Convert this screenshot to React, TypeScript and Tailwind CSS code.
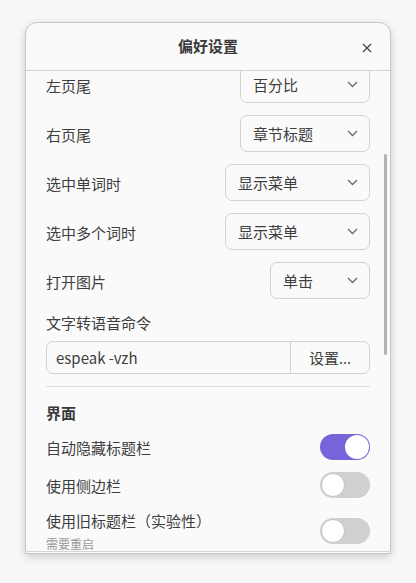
import { ReactNode } from 'react';

const Chevron = () => (
  <svg width="11" height="7" viewBox="0 0 11 7" className="text-[#6a6a6a]">
    <polyline points="1,1 5.5,5.5 10,1" fill="none" stroke="currentColor" strokeWidth="1.3" />
  </svg>
);

const Dropdown = ({ value, width }: { value: string; width: string }) => (
  <div
    className={`${width} h-[37px] flex items-center justify-between pl-[12px] pr-[11px] border border-[#d2d2d2] rounded-[7px] bg-[#fafafa] text-[15px] text-[#3e3e3e]`}
  >
    <span className="pt-[2px]">{value}</span>
    <Chevron />
  </div>
);

const Switch = ({ on }: { on?: boolean }) => (
  <div
    className={`w-[50px] h-[26px] rounded-full flex items-center px-[1px] ${
      on ? 'bg-[#7764d8] justify-end' : 'bg-[#d0d0d0] justify-start'
    }`}
  >
    <div className={`w-[24px] h-[24px] rounded-full bg-white ${on ? '' : 'border border-[#c4c4c4]'}`} />
  </div>
);

const Row = ({ label, children }: { label: ReactNode; children: ReactNode }) => (
  <div className="flex items-center justify-between">
    <span className="text-[15px] text-[#3e3e3e] pt-[3px]">{label}</span>
    {children}
  </div>
);

export default function App() {
  return (
    <div
      className="w-[416px] h-[583px] bg-[#f8f8f8] pt-[22px] pl-[25px]"
      style={{ fontFamily: '"Noto Sans CJK SC", "Noto Sans", sans-serif' }}
    >
      <div className="relative w-[366px] h-[532px] flex flex-col bg-[#fafafa] border border-[#c6c6c6] rounded-t-[12px] shadow-[0_3px_10px_rgba(0,0,0,0.18)] overflow-hidden">
        <div className="relative h-[48px] shrink-0 flex items-center justify-center border-b border-[#d4d4d4]">
          <span className="text-[15px] font-bold text-[#3a3a3a]">偏好设置</span>
          <svg width="10" height="10" viewBox="0 0 10 10" className="absolute right-[18px] top-[20px] text-[#454545]">
            <path d="M1 1L9 9M9 1L1 9" stroke="currentColor" strokeWidth="1.3" />
          </svg>
        </div>

        <div className="relative flex-1 overflow-hidden border-b border-[#d4d4d4] mb-[1px]">
          <div className="flex flex-col px-[20px] mt-[-5px]">
            <div className="flex flex-col gap-[12px]">
              <Row label="左页尾">
                <Dropdown value="百分比" width="w-[130px]" />
              </Row>
              <Row label="右页尾">
                <Dropdown value="章节标题" width="w-[130px]" />
              </Row>
              <Row label="选中单词时">
                <Dropdown value="显示菜单" width="w-[145px]" />
              </Row>
              <Row label="选中多个词时">
                <Dropdown value="显示菜单" width="w-[145px]" />
              </Row>
              <Row label="打开图片">
                <Dropdown value="单击" width="w-[100px]" />
              </Row>
            </div>

            <div className="mt-[14px] text-[15px] text-[#3e3e3e] leading-[20px]">文字转语音命令</div>
            <div className="mt-[8px] h-[33px] flex border border-[#d2d2d2] rounded-[7px] text-[15px] text-[#3e3e3e]">
              <div className="flex-1 flex items-center pl-[9px] pt-[2px]">espeak -vzh</div>
              <div className="w-[79px] flex items-center justify-center border-l border-[#d2d2d2] pt-[2px]">
                设置<span style={{ fontFamily: '"Noto Sans", sans-serif' }}>...</span>
              </div>
            </div>

            <div className="mt-[12px] h-px bg-[#dcdcdc]" />

            <div className="mt-[16px] text-[15px] font-bold text-[#3a3a3a] leading-[20px]">界面</div>

            <div className="mt-[11px] flex flex-col">
              <Row label="自动隐藏标题栏">
                <Switch on />
              </Row>
              <div className="mt-[12px]">
                <Row label="使用侧边栏">
                  <Switch />
                </Row>
              </div>
              <div className="mt-[11px] flex items-center justify-between">
                <div className="flex flex-col">
                  <span className="text-[15px] text-[#3e3e3e] leading-[20px] pt-[2px]">使用旧标题栏（实验性）</span>
                  <span className="text-[12px] text-[#9a9a9a] leading-[16px] mt-[5px]">需要重启</span>
                </div>
                <Switch />
              </div>
            </div>
          </div>

          <div className="absolute right-[3px] top-[83px] w-[3px] h-[201px] bg-[#b3b3b3] rounded-full" />
        </div>
      </div>
    </div>
  );
}
